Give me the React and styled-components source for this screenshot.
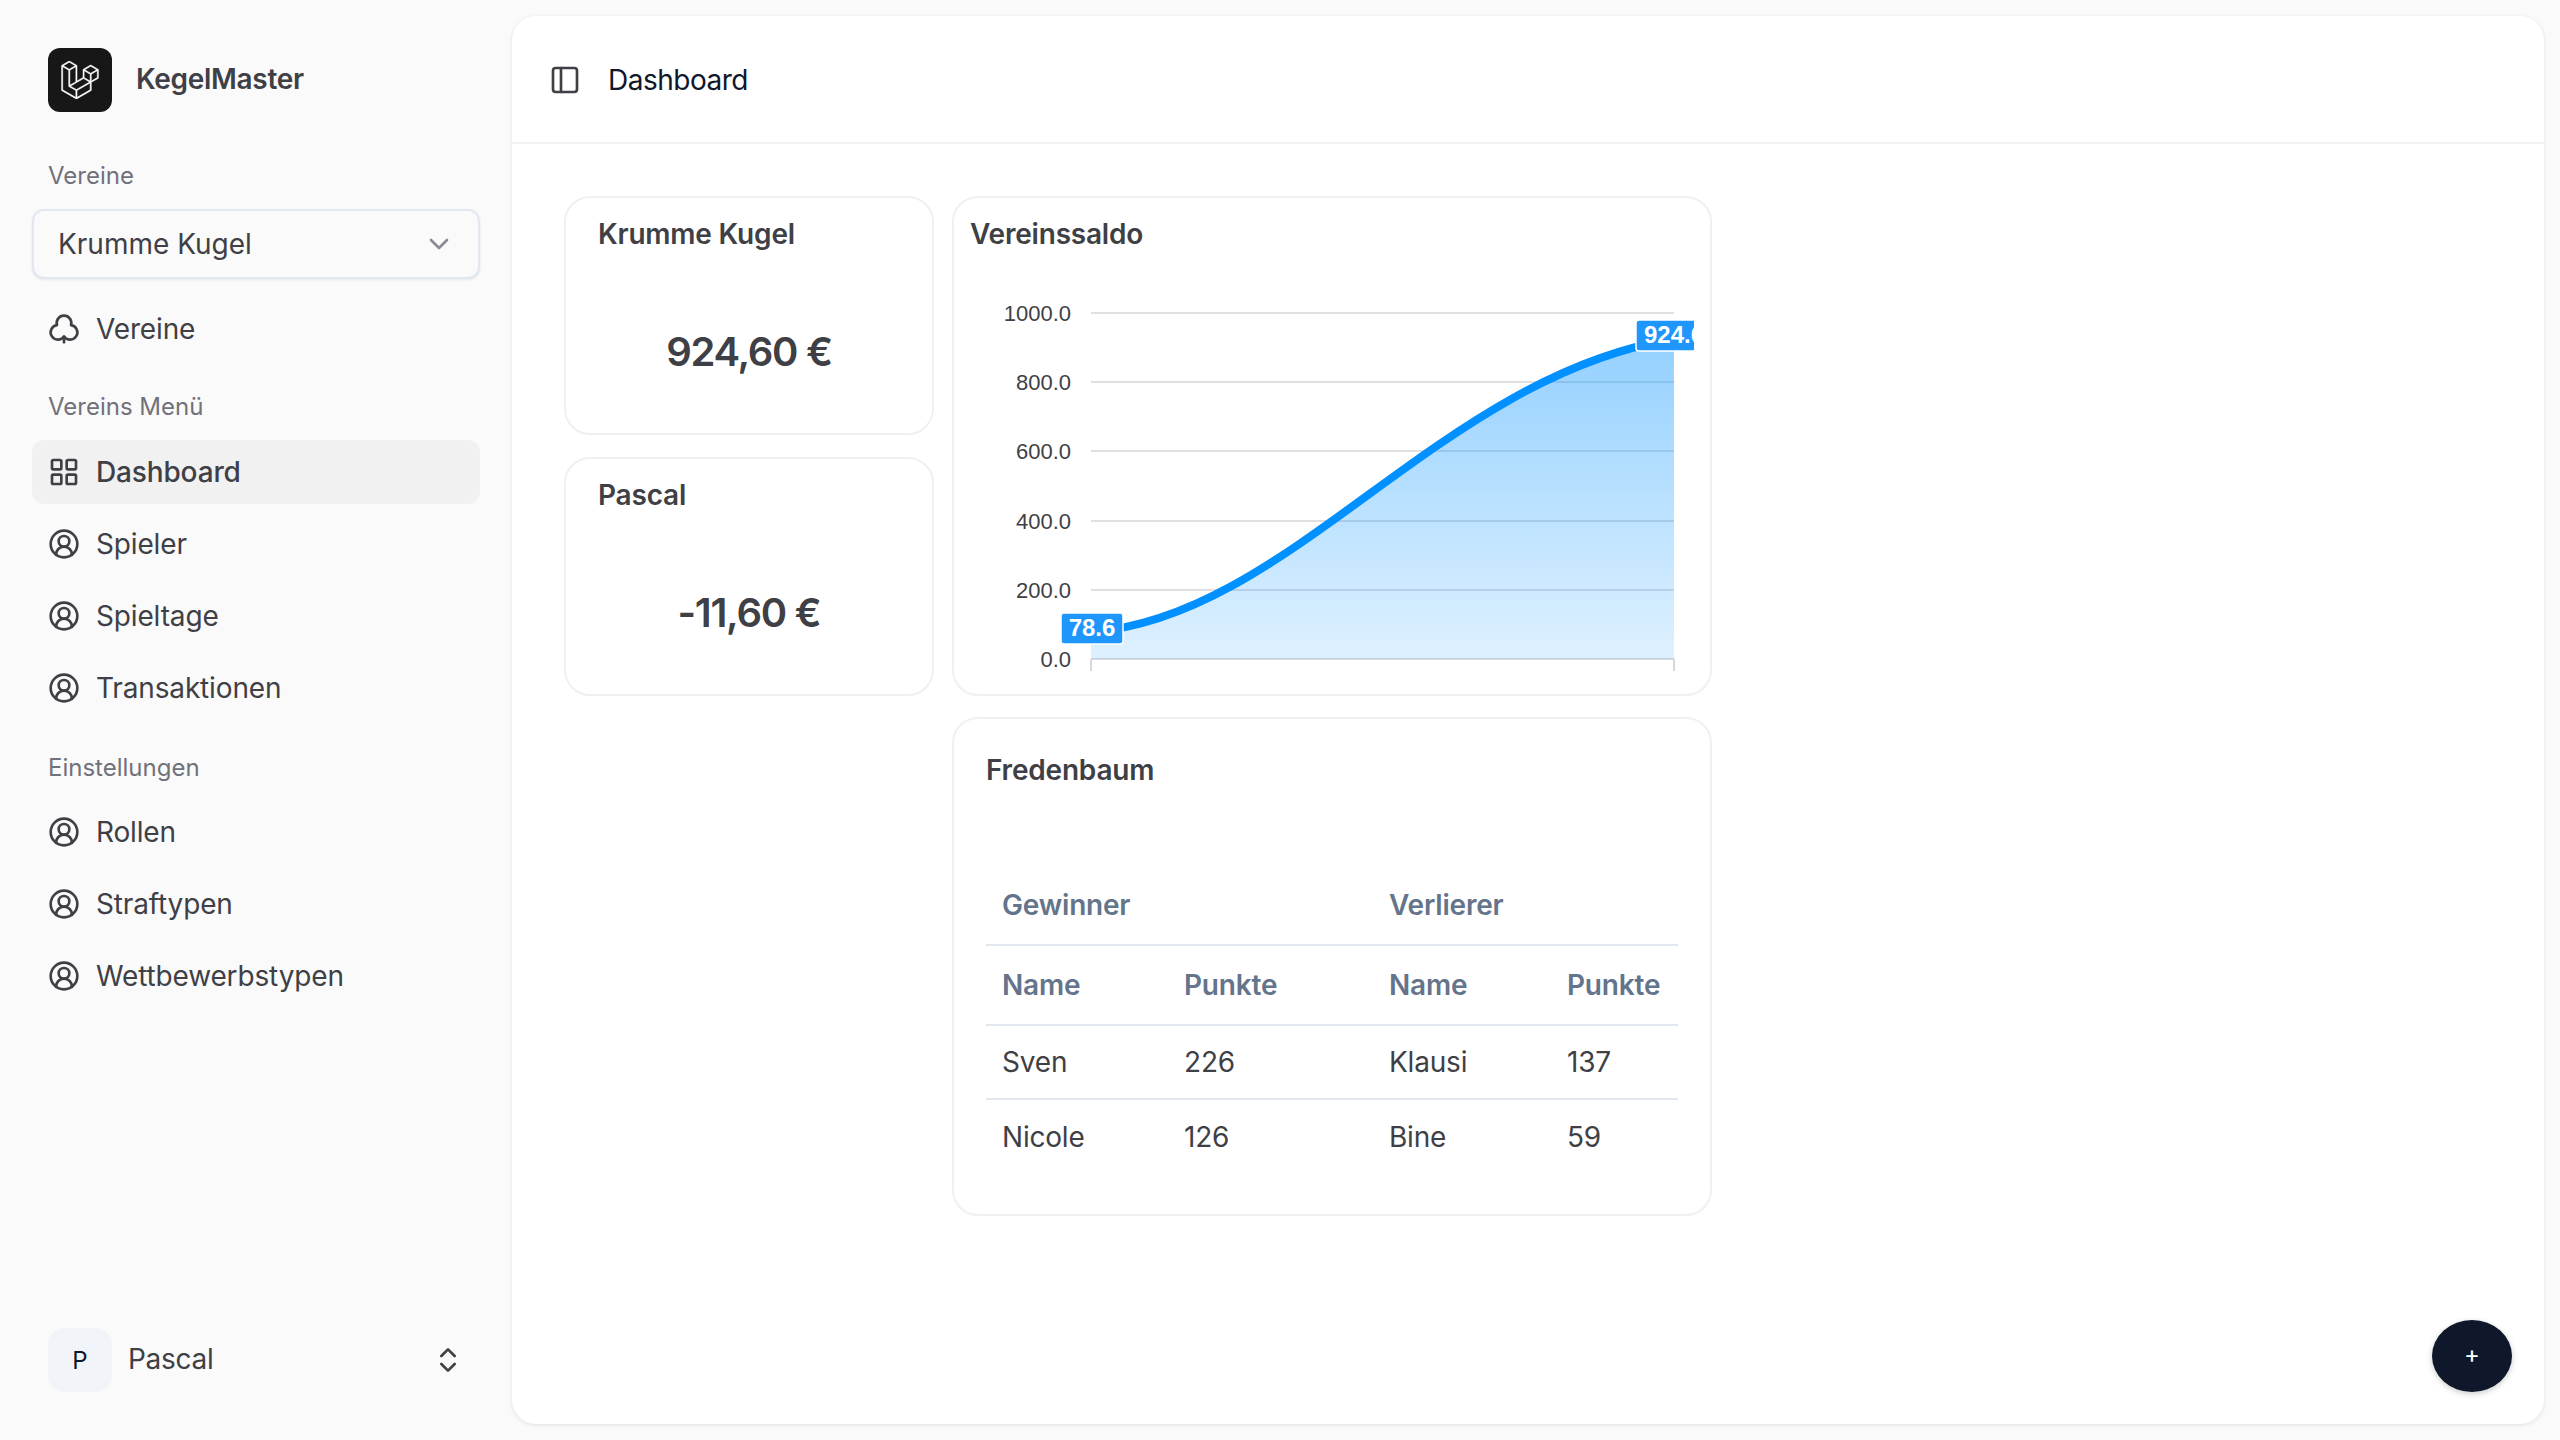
import React from "react";
import styled, { createGlobalStyle } from "styled-components";
import {
  ChevronDown,
  ChevronsUpDown,
  CircleUserRound,
  Club,
  LayoutGrid,
  PanelLeft,
} from "lucide-react";
import { SiLaravel } from "react-icons/si";

const GlobalStyle = createGlobalStyle`
  html, body {
    margin: 0;
    padding: 0;
    background: #fafafa;
    font-family: Inter, "Noto Sans", "Liberation Sans", sans-serif;
    color: #3f3f46;
  }
  * { box-sizing: border-box; }
`;

const Shell = styled.div`
  display: flex;
  width: 2560px;
  height: 1440px;
  overflow: hidden;
  background: #fafafa;
`;

const Sidebar = styled.aside`
  width: 512px;
  flex: none;
  display: flex;
  flex-direction: column;
  padding: 48px 32px 48px;
`;

const Brand = styled.div`
  display: flex;
  align-items: center;
  gap: 24px;
  height: 64px;
  padding-left: 16px;
  margin-bottom: 48px;
`;

const LogoBox = styled.div`
  width: 64px;
  height: 64px;
  border-radius: 12px;
  background: #171717;
  color: #fff;
  display: flex;
  align-items: center;
  justify-content: center;
  svg { stroke: currentColor; stroke-width: 0.3; }
`;

const BrandName = styled.span`
  font-size: 28px;
  font-weight: 600;
  letter-spacing: -0.3px;
  padding-bottom: 2px;
  color: #3f3f46;
`;

const GroupLabel = styled.div`
  height: 32px;
  line-height: 32px;
  padding-left: 16px;
  font-size: 24px;
  font-weight: 400;
  color: #71717a;
  margin-top: ${(p) => p.$top || 0}px;
  margin-bottom: ${(p) => p.$bottom || 16}px;
`;

const Select = styled.div`
  height: 70px;
  border: 2px solid #e2e8f0;
  border-radius: 12px;
  box-shadow: 0 1px 3px rgba(15, 23, 42, 0.08);
  background: #fafafa;
  display: flex;
  align-items: center;
  justify-content: space-between;
  padding: 0 23px 0 24px;
  font-size: 28px;
  color: #3f3f46;
  margin-bottom: 18px;
  svg { color: #8b8b93; }
`;

const NavList = styled.nav`
  display: flex;
  flex-direction: column;
  gap: 8px;
`;

const NavItem = styled.a`
  display: flex;
  align-items: center;
  gap: 16px;
  height: 64px;
  padding-left: 16px;
  border-radius: 12px;
  font-size: 28px;
  letter-spacing: -0.15px;
  font-weight: ${(p) => (p.$active ? 500 : 400)};
  color: #3f3f46;
  background: ${(p) => (p.$active ? "#f1f1f1" : "transparent")};
  svg { flex: none; }
`;

const UserRow = styled.div`
  margin-top: auto;
  display: flex;
  align-items: center;
  height: 64px;
  padding: 0 16px;
`;

const Avatar = styled.div`
  width: 64px;
  height: 64px;
  border-radius: 16px;
  background: #f1f5f9;
  color: #0f172a;
  font-size: 24px;
  display: flex;
  align-items: center;
  justify-content: center;
`;

const UserName = styled.span`
  margin-left: 16px;
  font-size: 28px;
  letter-spacing: -0.3px;
  padding-bottom: 2px;
  flex: 1;
`;

const Main = styled.main`
  position: relative;
  width: 2032px;
  height: 1408px;
  margin-top: 16px;
  background: #fff;
  border-radius: 24px;
  box-shadow: 0 1px 4px rgba(0, 0, 0, 0.1);
  display: flex;
  flex-direction: column;
`;

const TopBar = styled.header`
  height: 128px;
  flex: none;
  display: flex;
  align-items: center;
  gap: 27px;
  padding: 2px 0 0 37px;
  border-bottom: 2px solid #f1f1f2;
  font-size: 28px;
  letter-spacing: -0.5px;
  color: #0f172a;
  svg { color: #3f3f46; }
`;

const Board = styled.div`
  display: grid;
  grid-template-columns: 370px 760px;
  column-gap: 18px;
  align-items: start;
  padding: 52px 0 0 52px;
`;

const Column = styled.div`
  display: flex;
  flex-direction: column;
  gap: ${(p) => p.$gap}px;
`;

const Card = styled.section`
  border: 2px solid #f0f0f1;
  border-radius: 26px;
  background: #fff;
`;

const StatCard = styled(Card)`
  height: 239px;
  padding: 20px 32px 0;
  display: flex;
  flex-direction: column;
`;

const CardTitle = styled.h3`
  margin: 0;
  font-size: 28px;
  line-height: 32px;
  font-weight: 600;
  letter-spacing: -0.2px;
  color: #3f3f46;
`;

const StatValue = styled.div`
  flex: 1;
  display: flex;
  align-items: center;
  justify-content: center;
  padding-top: 20px;
  font-size: 40px;
  font-weight: 600;
  letter-spacing: -1.3px;
  color: #3f3f46;
`;

const ChartCard = styled(Card)`
  height: 500px;
  padding: 20px 0 0 16px;
`;

const ChartBox = styled.div`
  width: 734px;
  height: 390px;
  margin-top: 39px;
  margin-left: -10px;
  overflow: hidden;
  svg { display: block; }
  text { font-family: "Liberation Sans", Arial, sans-serif; }
`;

const TableCard = styled(Card)`
  height: 499px;
  padding: 35px 32px 0;
`;

const ResultTable = styled.table`
  width: 692px;
  margin-top: 79px;
  border-collapse: collapse;
  table-layout: fixed;
  font-size: 28px;
  letter-spacing: -0.2px;
  th, td {
    padding: 0 0 0 16px;
    text-align: left;
  }
  th {
    height: 80px;
    font-weight: 600;
    color: #64748b;
    border-bottom: 2px solid #e2e8f0;
  }
  td { height: 74px; color: #3f3f46; }
  tbody tr:first-child td { border-bottom: 2px solid #e2e8f0; }
`;

const Fab = styled.button`
  position: absolute;
  right: 32px;
  bottom: 32px;
  width: 80px;
  height: 72px;
  padding: 0 0 4px;
  border: none;
  border-radius: 50%;
  background: #0f172a;
  color: #fff;
  font-family: inherit;
  font-size: 24px;
  box-shadow: 0 2px 6px rgba(0, 0, 0, 0.2);
`;

const BalanceChart = () => {
  // svg origin sits at page x 960, y 290
  const ox = 960;
  const oy = 290;
  const left = 1091 - ox;
  const right = 1674 - ox;
  const ticks = [
    ["1000.0", 314],
    ["800.0", 383],
    ["600.0", 452],
    ["400.0", 522],
    ["200.0", 591],
    ["0.0", 660],
  ];
  const curve = `M${left} ${633 - oy} C${1290 - ox} ${618 - oy} ${1441 - ox} ${377 - oy} ${right} ${340 - oy}`;
  return (
    <svg width="734" height="390" viewBox="0 0 734 390">
      <defs>
        <linearGradient id="saldo" x1="0" y1="0" x2="0" y2="1">
          <stop offset="0" stopColor="#0090ff" stopOpacity="0.42" />
          <stop offset="1" stopColor="#0090ff" stopOpacity="0.13" />
        </linearGradient>
      </defs>
      {ticks.map(([label, y]) => (
        <g key={label}>
          <line x1={left} x2={right} y1={y - oy} y2={y - oy} stroke="#e0e0e3" strokeWidth="2" />
          <text x={1071 - ox} y={y - oy + 8} textAnchor="end" fontSize="22" fill="#3f3f46">
            {label}
          </text>
        </g>
      ))}
      <path d={`M${left} ${660 - oy} L${left} 382 M${right} ${660 - oy} L${right} 382`} stroke="#d8d8dc" strokeWidth="2" />
      <line x1={left} x2={right} y1={660 - oy} y2={660 - oy} stroke="#d8dbe0" strokeWidth="2" />
      <path d={`${curve} L${right} ${660 - oy} L${left} ${660 - oy} Z`} fill="url(#saldo)" />
      <path d={curve} fill="none" stroke="#0090ff" strokeWidth="8" />
      <rect x={1061 - ox} y={614 - oy} width="62" height="31" rx="3" fill="#1e96fc" stroke="#fff" strokeWidth="1.5" />
      <text x={1092 - ox} y={637 - oy} textAnchor="middle" fontSize="24" fontWeight="700" fill="#fff">
        78.6
      </text>
      <rect x={1636 - ox} y={321 - oy} width="62" height="31" rx="3" fill="#1e96fc" stroke="#fff" strokeWidth="1.5" />
      <text x={1644 - ox} y={344 - oy} fontSize="24" fontWeight="700" fill="#fff">
        924.6
      </text>
    </svg>
  );
};

const topMenu = ["Dashboard", "Spieler", "Spieltage", "Transaktionen"];
const settingsMenu = ["Rollen", "Straftypen", "Wettbewerbstypen"];

export default function App() {
  return (
    <Shell>
      <GlobalStyle />
      <Sidebar>
        <Brand>
          <LogoBox>
            <SiLaravel size={38} />
          </LogoBox>
          <BrandName>KegelMaster</BrandName>
        </Brand>

        <GroupLabel $bottom={17}>Vereine</GroupLabel>
        <Select>
          Krumme Kugel
          <ChevronDown size={32} />
        </Select>
        <NavItem>
          <Club size={32} />
          Vereine
        </NavItem>

        <GroupLabel $top={30} $bottom={17}>Vereins Menü</GroupLabel>
        <NavList>
          {topMenu.map((item, i) => (
            <NavItem key={item} $active={i === 0}>
              {i === 0 ? <LayoutGrid size={32} /> : <CircleUserRound size={32} />}
              {item}
            </NavItem>
          ))}
        </NavList>

        <GroupLabel $top={32}>Einstellungen</GroupLabel>
        <NavList>
          {settingsMenu.map((item) => (
            <NavItem key={item}>
              <CircleUserRound size={32} />
              {item}
            </NavItem>
          ))}
        </NavList>

        <UserRow>
          <Avatar>P</Avatar>
          <UserName>Pascal</UserName>
          <ChevronsUpDown size={32} />
        </UserRow>
      </Sidebar>

      <Main>
        <TopBar>
          <PanelLeft size={32} />
          Dashboard
        </TopBar>
        <Board>
          <Column $gap={22}>
            <StatCard>
              <CardTitle>Krumme Kugel</CardTitle>
              <StatValue>924,60 €</StatValue>
            </StatCard>
            <StatCard>
              <CardTitle>Pascal</CardTitle>
              <StatValue>-11,60 €</StatValue>
            </StatCard>
          </Column>
          <Column $gap={21}>
            <ChartCard>
              <CardTitle>Vereinssaldo</CardTitle>
              <ChartBox>
                <BalanceChart />
              </ChartBox>
            </ChartCard>
            <TableCard>
              <CardTitle>Fredenbaum</CardTitle>
              <ResultTable>
                <colgroup>
                  <col style={{ width: 182 }} />
                  <col style={{ width: 205 }} />
                  <col style={{ width: 178 }} />
                  <col style={{ width: 127 }} />
                </colgroup>
                <thead>
                  <tr>
                    <th colSpan={2}>Gewinner</th>
                    <th colSpan={2}>Verlierer</th>
                  </tr>
                  <tr>
                    <th>Name</th>
                    <th>Punkte</th>
                    <th>Name</th>
                    <th>Punkte</th>
                  </tr>
                </thead>
                <tbody>
                  <tr>
                    <td>Sven</td>
                    <td>226</td>
                    <td>Klausi</td>
                    <td>137</td>
                  </tr>
                  <tr>
                    <td>Nicole</td>
                    <td>126</td>
                    <td>Bine</td>
                    <td>59</td>
                  </tr>
                </tbody>
              </ResultTable>
            </TableCard>
          </Column>
        </Board>
        <Fab>+</Fab>
      </Main>
    </Shell>
  );
}
